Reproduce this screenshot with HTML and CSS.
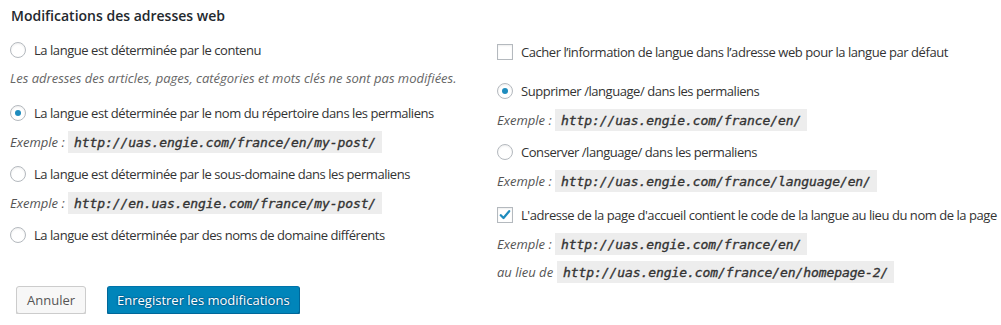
FILE: index.html
```html
<!DOCTYPE html>
<html lang="fr">
<head>
<meta charset="utf-8">
<link rel="stylesheet" href="styles.css">
</head>
<body>
<div class="wrap">
  <h2 class="title">Modifications des adresses web</h2>
  <div class="columns">
    <div class="col col-left">
      <div class="row opt first"><span class="radio"></span><span class="lbl">La langue est déterminée par le contenu</span></div>
      <div class="row desc">Les adresses des articles, pages, catégories et mots clés ne sont pas modifiées.</div>
      <div class="row opt after-desc"><span class="radio checked"></span><span class="lbl">La langue est déterminée par le nom du répertoire dans les permaliens</span></div>
      <div class="row ex"><span class="exlbl">Exemple :</span><code>http://uas.engie.com/france/en/my-post/</code></div>
      <div class="row opt"><span class="radio"></span><span class="lbl">La langue est déterminée par le sous-domaine dans les permaliens</span></div>
      <div class="row ex"><span class="exlbl">Exemple :</span><code>http://en.uas.engie.com/france/my-post/</code></div>
      <div class="row opt"><span class="radio"></span><span class="lbl">La langue est déterminée par des noms de domaine différents</span></div>
    </div>
    <div class="col col-right">
      <div class="row opt first-r"><span class="check"></span><span class="lbl">Cacher l’information de langue dans l’adresse web pour la langue par défaut</span></div>
      <div class="row opt after-check"><span class="radio checked"></span><span class="lbl">Supprimer /language/ dans les permaliens</span></div>
      <div class="row ex"><span class="exlbl">Exemple :</span><code>http://uas.engie.com/france/en/</code></div>
      <div class="row opt"><span class="radio"></span><span class="lbl">Conserver /language/ dans les permaliens</span></div>
      <div class="row ex"><span class="exlbl">Exemple :</span><code>http://uas.engie.com/france/language/en/</code></div>
      <div class="row opt after-ex"><span class="check checked"><svg viewBox="0 0 16 16" width="16" height="16"><path d="M3.2 8.3 L6.3 11.4 L12.8 3.6" fill="none" stroke="#1e8cbe" stroke-width="2.6" stroke-linecap="round" stroke-linejoin="round"/></svg></span><span class="lbl">L'adresse de la page d'accueil contient le code de la langue au lieu du nom de la page</span></div>
      <div class="row ex"><span class="exlbl">Exemple :</span><code>http://uas.engie.com/france/en/</code></div>
      <div class="row ex tight"><span class="exlbl alt">au lieu de</span><code>http://uas.engie.com/france/en/homepage-2/</code></div>
    </div>
  </div>
  <div class="actions">
    <button class="btn btn-secondary" type="button">Annuler</button>
    <button class="btn btn-primary" type="button">Enregistrer les modifications</button>
  </div>
</div>
</body>
</html>
```

FILE: styles.css
```css
html, body {
  margin: 0;
  padding: 0;
  background: #ffffff;
}
body {
  font-family: "Open Sans", "Liberation Sans", sans-serif;
  font-size: 13px;
  color: #444444;
}
.wrap {
  padding: 0 0 0 10px;
}
.title {
  margin: 0;
  padding: 5px 0 0 1px;
  height: 24px;
  line-height: 22px;
  font-size: 14px;
  font-weight: 600;
  color: #23282d;
}
.columns {
  display: grid;
  grid-template-columns: 487px 1fr;
}
.col {
  display: flex;
  flex-direction: column;
}
.row {
  display: flex;
  align-items: center;
  height: 22px;
  white-space: nowrap;
}
.lbl {
  letter-spacing: -0.45px;
  color: #333333;
}
.opt { margin-top: 10px; }
.first { margin-top: 10px; }
.first-r { margin-top: 12px; }
.desc {
  margin-top: 6px;
  font-style: italic;
  color: #666666;
}
.after-desc { margin-top: 13px; }
.after-check { margin-top: 17px; }
.after-ex { margin-top: 12px; }
.ex { margin-top: 7px; }
.tight { margin-top: 6px; }
.radio, .check {
  box-sizing: border-box;
  width: 16px;
  height: 16px;
  border: 1px solid #b4b9be;
  background: #ffffff;
  box-shadow: inset 0 1px 2px rgba(0, 0, 0, 0.07);
  margin-right: 8px;
  flex: none;
  display: flex;
  align-items: center;
  justify-content: center;
}
.radio { border-radius: 50%; }
.radio.checked::before {
  content: "";
  width: 6px;
  height: 6px;
  border-radius: 50%;
  background: #1e8cbe;
}
.check svg { display: block; }
.exlbl {
  font-style: italic;
  color: #555555;
  width: 58px;
  flex: none;
}
.exlbl.alt { width: 60px; }
code {
  font-family: "DejaVu Sans Mono", "Liberation Mono", monospace;
  font-style: italic;
  font-weight: normal;
  font-size: 13px;
  letter-spacing: -0.08px;
  color: #333333;
  -webkit-text-stroke: 0.35px #333333;
  background: #ededed;
  padding: 3px 6px 2px 6px;
  line-height: 17px;
}
.actions {
  display: flex;
  gap: 21px;
  margin-top: 3px;
  padding-left: 6px;
}
.btn {
  box-sizing: border-box;
  height: 28px;
  font-family: "Open Sans", "Liberation Sans", sans-serif;
  font-size: 13px;
  line-height: 26px;
  padding: 0 10px 1px;
  border-radius: 3px;
  border: 1px solid #cccccc;
  cursor: pointer;
}
.btn-secondary {
  background: #f7f7f7;
  color: #555555;
  box-shadow: 0 1px 0 #cccccc;
}
.btn-primary {
  padding: 0 9px 1px;
  background: #0085ba;
  border-color: #0073aa #006799 #006799;
  color: #ffffff;
  box-shadow: 0 1px 0 #006799;
  text-shadow: 0 -1px 1px #006799, 1px 0 1px #006799, 0 1px 1px #006799, -1px 0 1px #006799;
}
```
